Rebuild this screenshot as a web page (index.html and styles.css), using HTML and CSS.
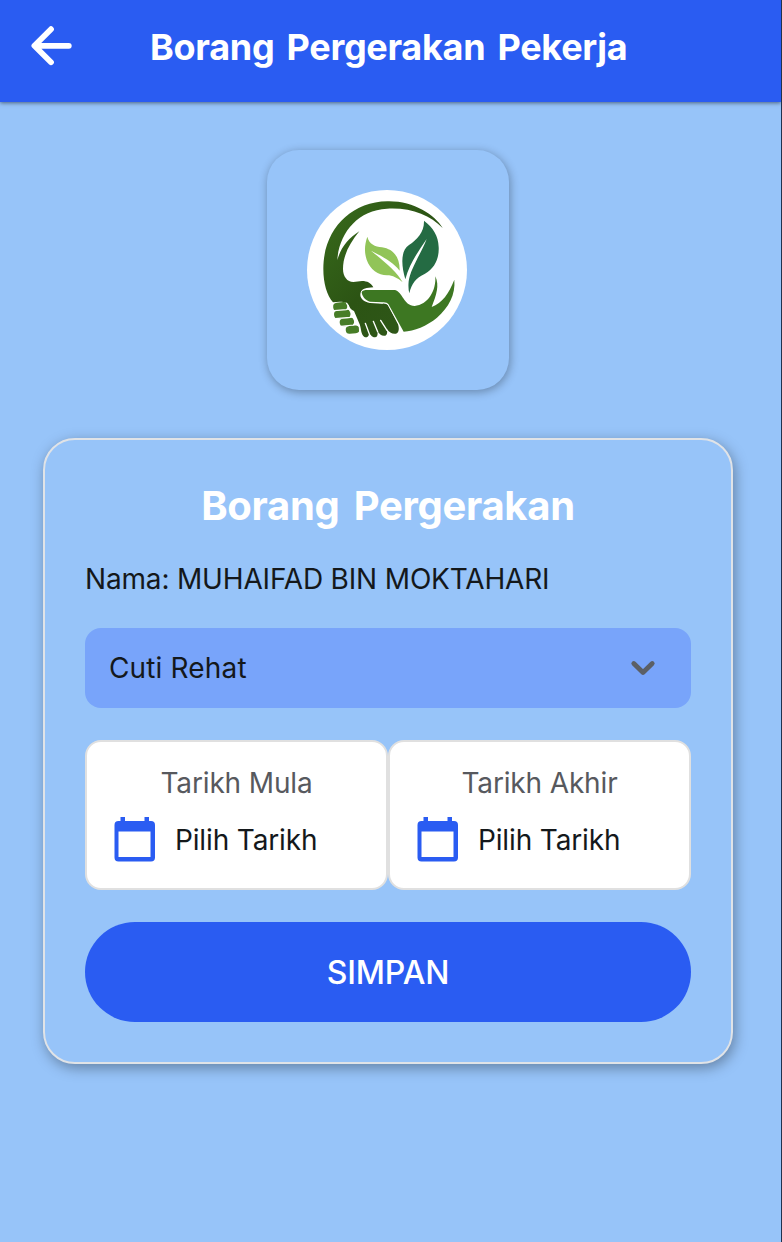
FILE: index.html
```html
<!DOCTYPE html>
<html lang="ms">
<head>
<meta charset="utf-8">
<title>Borang Pergerakan Pekerja</title>
<link rel="stylesheet" href="styles.css">
</head>
<body>
<div class="screen">
  <header class="topbar">
    <svg class="back" viewBox="0 0 44 44" fill="none" stroke="#fff" stroke-width="5.8" stroke-linecap="round" stroke-linejoin="round"><path d="M21 5.2 4.4 21.8 21 38.200M5.2 21.8H38.8"/></svg>
    <h1 class="topbar-title">Borang Pergerakan Pekerja</h1>
  </header>
  <main class="content">
    <div class="logo-card">
      <svg class="logo" viewBox="30 30 480 480">
        <defs>
          <linearGradient id="arm" x1="0" y1="0" x2="1" y2="1"><stop offset="0" stop-color="#386b1b"/><stop offset=".5" stop-color="#2c5414"/><stop offset="1" stop-color="#30581a"/></linearGradient>
        </defs>
        <circle cx="270" cy="270" r="240" fill="#fff"/>
        <path fill="url(#arm)" d="M437 144C414 104 348 62 271 64C159 66 79 151 79 266C79 311 90 345 108 367C124 365 138 364 150 370C160 377 154 386 171 393C179 411 184 424 188 433C193 447 191 458 199 468C204 475 215 473 216 462C218 457 222 471 234 472C242 472 243 463 241 452C248 463 254 469 265 467C272 464 271 456 269 446C277 457 286 463 297 461C308 457 306 441 303 433L273 376Q269 370 256 371L219 369C197 365 185 350 192 336C196 325 208 324 229 322C222 309 211 303 195 303L169 306C151 306 138 290 138 267C138 226 158 190 187 154C154 175 131 203 121 240C126 161 181 90 270 86C342 82 398 105 437 144Z"/>
        <path fill="none" stroke="#fff" stroke-width="4" stroke-linecap="round" d="M205 430 217 462M229 424 242 455M251 421 270 451"/>
        <path fill="#3d7722" stroke="#fff" stroke-width="5" paint-order="stroke" d="M194 337C196 331 203 330 212 330H294C317 336 320 377 353 378C392 375 418 333 415 289C428 317 418 345 404 381C436 368 455 342 472 299C476 344 455 382 420 413C390 438 351 453 320 455L274 372Q270 366 256 367L219 365C203 361 195 347 194 337Z"/>
        <g fill="#477d27"><rect x="108.500" y="367" width="43" height="26" rx="12" transform="rotate(-5 130 380)"/><rect x="111" y="390.500" width="51" height="24.500" rx="12" transform="rotate(-5 136 402)"/><rect x="128" y="414.500" width="44" height="23.500" rx="11.500" transform="rotate(-5 150 426)"/><rect x="146" y="437" width="41" height="23.500" rx="11.500" transform="rotate(-5 167 447)"/></g>
        <path fill="none" stroke="#fff" stroke-width="3.500" d="M111 392 148 389Q154 387 153 377L148 368M115 416 159 412Q164 408 162 398L157 388M132 439 169 435Q174 432 173 423L169 412M188 456 187 438L172 429"/>
        <path fill="#91c458" d="M211 170C203 193 201 216 209 239C219 269 244 285 270 286C287 286 302 294 317 307C301 277 264 246 222 212C259 231 287 246 308 272C309 230 288 207 255 202C234 200 216 192 211 170Z"/>
        <path fill="#246b43" d="M381 122C382 156 361 178 336 195C311 212 312 253 325 298C337 252 363 215 389 177C373 219 340 266 335 304Q333 326 337 340C344 309 356 295 384 281C413 265 427 235 425 201C424 168 409 143 381 122Z"/>
      </svg>
    </div>
    <section class="form-card">
      <h2 class="form-title">Borang Pergerakan</h2>
      <p class="name">Nama: MUHAIFAD BIN MOKTAHARI</p>
      <div class="select">
        <span class="select-value">Cuti Rehat</span>
        <svg class="chevron" viewBox="0 0 26 18" fill="none" stroke="#5b5f66" stroke-width="4.8" stroke-linecap="round" stroke-linejoin="round"><path d="M3.8 4.5 13 13.5 22.2 4.5"/></svg>
      </div>
      <div class="dates">
        <div class="date">
          <span class="date-label">Tarikh Mula</span>
          <div class="date-row">
            <svg class="calendar" viewBox="0.500 1 42 46" fill="#2a5cf2"><path fill-rule="evenodd" d="M7 1H11.500V5H31V1H35.500V5H37.500Q41.500 5 41.500 9V41.500Q41.500 45.500 37.500 45.500H5Q1 45.500 1 41.500V9Q1 5 5 5H7ZM5 15.500V41H37V15.500Z"/></svg>
            <span>Pilih Tarikh</span>
          </div>
        </div>
        <div class="date">
          <span class="date-label">Tarikh Akhir</span>
          <div class="date-row">
            <svg class="calendar" viewBox="0.500 1 42 46" fill="#2a5cf2"><path fill-rule="evenodd" d="M7 1H11.500V5H31V1H35.500V5H37.500Q41.500 5 41.500 9V41.500Q41.500 45.500 37.500 45.500H5Q1 45.500 1 41.500V9Q1 5 5 5H7ZM5 15.500V41H37V15.500Z"/></svg>
            <span>Pilih Tarikh</span>
          </div>
        </div>
      </div>
      <button class="save">SIMPAN</button>
    </section>
  </main>
</div>
</body>
</html>
```
FILE: styles.css
```css
* { box-sizing: border-box; }
body { margin: 0; font-family: Inter, sans-serif; font-size: 28px; color: #14181b; }
.screen { height: 1242px; background: #97c4f9; border-right: 1px solid #20324e; overflow: hidden; }
.topbar { display: flex; align-items: center; height: 102px; padding: 0 155px 8px 30px; background: #2a5cf2; box-shadow: 0 1px 4px rgba(0,0,0,.5); }
.back { flex: none; width: 44px; height: 44px; margin-top: -3px; }
.topbar-title { flex: 1; margin: 0 0 0 76px; font: 700 36px/44px Inter, sans-serif; letter-spacing: -.3px; word-spacing: 4px; color: #fff; white-space: nowrap; }
.content { display: flex; flex-direction: column; align-items: center; gap: 48px; padding: 48px 48px 0 43px; }
.logo-card { display: flex; align-items: center; justify-content: center; width: 242px; height: 240px; padding-right: 2px; border-radius: 32px; background: #97c4f9; box-shadow: 1px 2px 10px rgba(0,0,0,.32); }
.logo { width: 160px; height: 160px; }
.form-card { align-self: stretch; height: 626px; padding: 40px; border: 2px solid #e0e3e7; border-radius: 32px; background: #97c4f9; box-shadow: 2px 4px 14px rgba(0,0,0,.34); }
.form-title { margin: 0; font: 700 40px/52px Inter, sans-serif; letter-spacing: -.3px; word-spacing: 5px; text-align: center; color: #fff; white-space: nowrap; }
.name { margin: 30px 0 32px; line-height: 34px; letter-spacing: -.17px; white-space: nowrap; }
.select { display: flex; align-items: center; justify-content: space-between; height: 80px; padding: 0 35px 0 24px; border-radius: 16px; background: #78a4fa; }
.select-value { letter-spacing: .15px; }
.chevron { width: 26px; height: 18px; }
.dates { display: flex; margin: 32px 0; }
.date { flex: 1; height: 150px; padding: 24px 27px; border: 2px solid #e0e0e0; border-radius: 16px; background: #fff; text-align: center; letter-spacing: -.15px; }
.date-label { display: block; line-height: 34px; color: #57595e; }
.date-row { display: flex; align-items: center; gap: 19px; margin-top: 17px; }
.calendar { width: 42px; height: 46px; overflow: visible; }
.save { display: block; width: 100%; height: 100px; border: 0; border-radius: 50px; background: #2a5cf2; color: #fff; font: 500 32px Inter, sans-serif; letter-spacing: -.2px; }
```
